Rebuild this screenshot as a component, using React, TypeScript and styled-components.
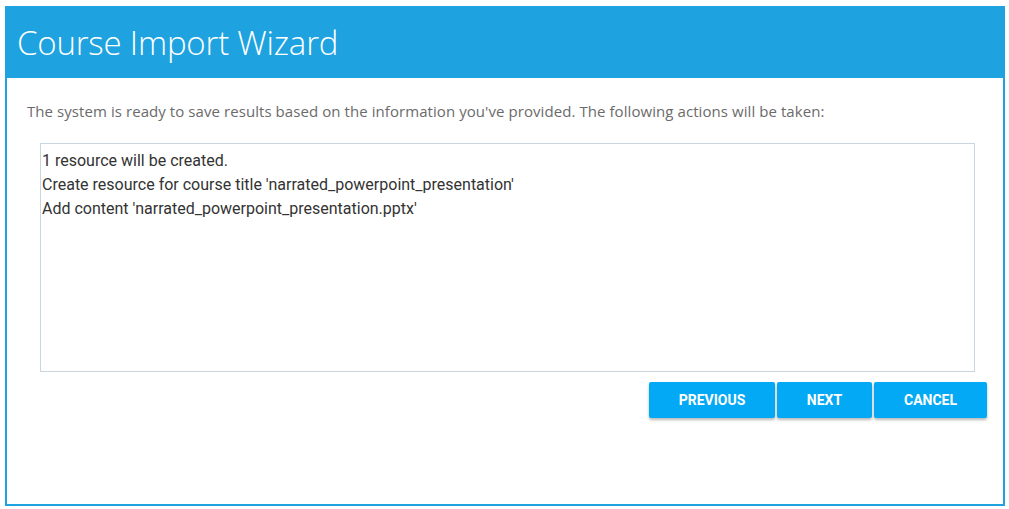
import styled, { createGlobalStyle } from 'styled-components';

const GlobalStyle = createGlobalStyle`
  html, body {
    margin: 0;
    padding: 0;
    background: #ffffff;
  }
`;

const Page = styled.div`
  padding: 6px 0 0 5px;
`;

const Wizard = styled.div`
  box-sizing: border-box;
  width: 1000px;
  height: 500px;
  border: 2px solid #1ea2e0;
  border-top: none;
  display: flex;
  flex-direction: column;
`;

const Header = styled.header`
  margin: 0 -2px;
  height: 72px;
  background: #1ea2e0;
  display: flex;
  align-items: center;
  padding-left: 12px;
`;

const Title = styled.h1`
  margin: 0;
  font-family: 'Open Sans', 'Noto Sans', sans-serif;
  font-weight: 300;
  font-size: 33px;
  color: #ffffff;
  letter-spacing: -0.2px;
`;

const Body = styled.div`
  padding: 22px 16px 0 20px;
  display: flex;
  flex-direction: column;
`;

const Intro = styled.p`
  margin: 0;
  font-family: 'Open Sans', 'Noto Sans', sans-serif;
  font-size: 15px;
  letter-spacing: 0.07px;
  color: #6b6b6b;
  line-height: 22px;
`;

const Summary = styled.div`
  box-sizing: border-box;
  margin: 21px 0 0 13px;
  width: 935px;
  height: 229px;
  border: 1px solid #c9d6df;
  padding: 5px 1px;
  font-family: Roboto, 'Liberation Sans', sans-serif;
  font-size: 16px;
  line-height: 24px;
  color: #333333;
`;

const Actions = styled.div`
  display: flex;
  justify-content: flex-end;
  gap: 2px;
  margin-top: 10px;
`;

const Button = styled.button<{ $width: number }>`
  width: ${({ $width }) => $width}px;
  height: 36px;
  border: none;
  border-radius: 2px;
  background: #03a9f4;
  color: #ffffff;
  font-family: Roboto, 'Liberation Sans', sans-serif;
  font-weight: 700;
  font-size: 14px;
  text-transform: uppercase;
  box-shadow: 0 2px 3px rgba(0, 0, 0, 0.28);
  cursor: pointer;
`;

const App = () => (
  <Page>
    <GlobalStyle />
    <Wizard>
      <Header>
        <Title>Course Import Wizard</Title>
      </Header>
      <Body>
        <Intro>
          The system is ready to save results based on the information you've provided. The following actions will be taken:
        </Intro>
        <Summary>
          <div>1 resource will be created.</div>
          <div>Create resource for course title 'narrated_powerpoint_presentation'</div>
          <div>Add content 'narrated_powerpoint_presentation.pptx'</div>
        </Summary>
        <Actions>
          <Button $width={126}>Previous</Button>
          <Button $width={95}>Next</Button>
          <Button $width={113}>Cancel</Button>
        </Actions>
      </Body>
    </Wizard>
  </Page>
);

export default App;
